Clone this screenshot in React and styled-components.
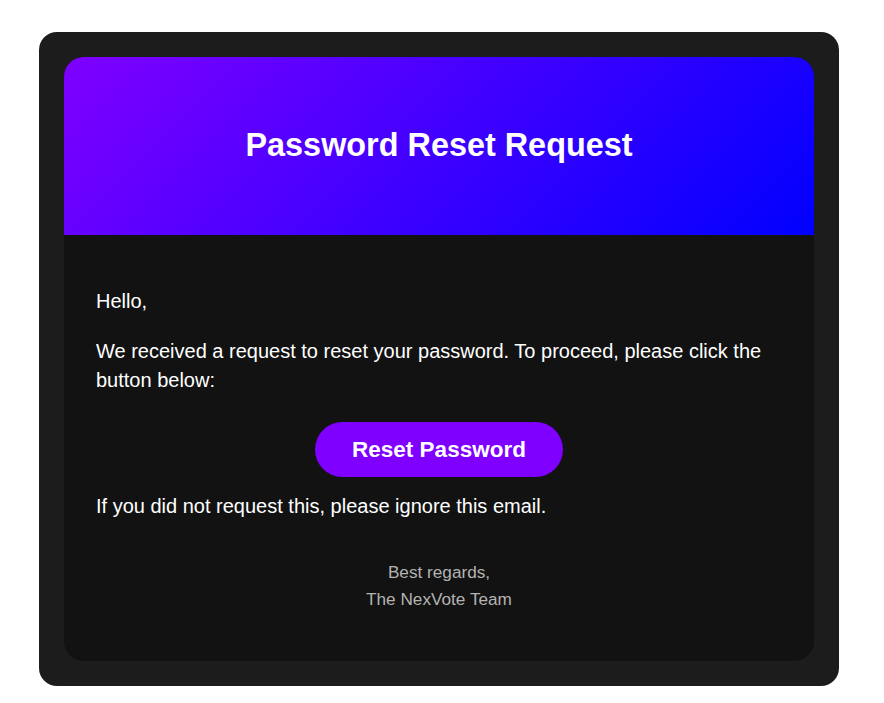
import styled, { createGlobalStyle } from "styled-components";

const GlobalStyle = createGlobalStyle`
    html, body {
        margin: 0;
        padding: 0;
        background: #ffffff;
        font-family: "Liberation Sans", Arial, sans-serif;
    }
`;

const Page = styled.div`
    padding: 32px 0 17px 39px;
`;

const OuterCard = styled.div`
    box-sizing: border-box;
    width: 800px;
    padding: 25px;
    background-color: #1c1c1c;
    border-radius: 18px;
`;

const EmailCard = styled.div`
    background-color: #121212;
    border-radius: 20px;
    overflow: hidden;
`;

const Header = styled.header`
    box-sizing: border-box;
    height: 178px;
    padding-bottom: 2px;
    display: flex;
    align-items: center;
    justify-content: center;
    background: linear-gradient(135deg, #7f00ff, #0000ff);
`;

const Title = styled.h1`
    margin: 0;
    font-size: 32.4px;
    line-height: 38px;
    font-weight: 700;
    color: #ffffff;
`;

const Body = styled.div`
    display: flex;
    flex-direction: column;
    padding: 52px 32px 48px;
`;

const Text = styled.p`
    margin: 0 0 ${({ $gap }) => $gap || 0}px;
    font-size: 20px;
    line-height: 29px;
    color: #ffffff;
`;

const ButtonRow = styled.div`
    display: flex;
    justify-content: center;
    margin-bottom: 15px;
`;

const ResetButton = styled.a`
    display: inline-block;
    padding: 15px 37px;
    border-radius: 999px;
    background-color: #7f00ff;
    color: #ffffff;
    font-size: 22.5px;
    line-height: 25px;
    font-weight: 700;
    text-decoration: none;
    cursor: pointer;
`;

const Footer = styled.footer`
    margin-top: 38px;
    text-align: center;
    font-size: 17.2px;
    line-height: 27px;
    color: #b3b3b3;
`;

export default function App() {
    return (
        <>
            <GlobalStyle />
            <Page>
                <OuterCard>
                    <EmailCard>
                        <Header>
                            <Title>Password Reset Request</Title>
                        </Header>
                        <Body>
                            <Text $gap={21}>Hello,</Text>
                            <Text $gap={26.7}>
                                We received a request to reset your password. To
                                proceed, please click the button below:
                            </Text>
                            <ButtonRow>
                                <ResetButton>Reset Password</ResetButton>
                            </ButtonRow>
                            <Text>
                                If you did not request this, please ignore this
                                email.
                            </Text>
                            <Footer>
                                Best regards,
                                <br />
                                The NexVote Team
                            </Footer>
                        </Body>
                    </EmailCard>
                </OuterCard>
            </Page>
        </>
    );
}
